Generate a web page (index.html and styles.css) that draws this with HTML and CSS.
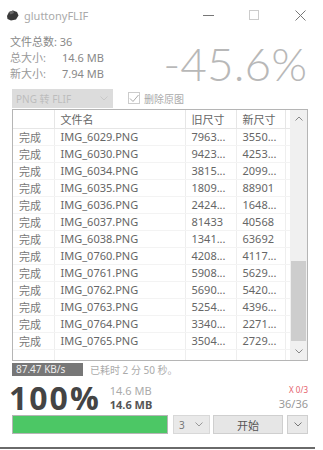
FILE: index.html
```html
<!DOCTYPE html>
<html lang="zh-CN">
<head>
    <meta charset="UTF-8">
    <meta name="viewport" content="width=device-width, initial-scale=1.0">
    <title>gluttonyFLIF</title>
    <link rel="stylesheet" href="styles.css">
</head>
<body>
    <div class="window">
        <div class="titlebar">
            <svg class="logo" width="13" height="11" viewBox="0 0 13 11">
                <polygon points="1,6 3,2 7,0.5 11,2 12.5,5.5 10,9.5 5,10.5 1.5,9" fill="#3a3a3a"/>
                <polygon points="3,2 7,0.5 8,3 4.5,4.5" fill="#6a6a6a"/>
            </svg>
            <span class="title">gluttonyFLIF</span>
            <span class="win-btn"><span class="min-icon"></span></span>
            <span class="win-btn"><span class="max-icon"></span></span>
            <span class="win-btn">
                <svg width="11" height="11" viewBox="0 0 11 11"><path d="M0.5 0.5 L10.5 10.5 M10.5 0.5 L0.5 10.5" stroke="#777" stroke-width="1"/></svg>
            </span>
        </div>

        <div class="summary">
            <div class="info">
                <div class="info-row">文件总数: 36</div>
                <div class="info-row"><span class="label">总大小:</span>14.6 MB</div>
                <div class="info-row"><span class="label">新大小:</span>7.94 MB</div>
            </div>
            <div class="ratio">-45.6%</div>
        </div>

        <div class="options">
            <div class="select">
                <span>PNG 转 FLIF</span>
                <svg width="8" height="5" viewBox="0 0 8 5"><path d="M0.5 0.5 L4 4 L7.5 0.5" fill="none" stroke="#c8c8c8"/></svg>
            </div>
            <label class="check">
                <span class="box">
                    <svg width="10" height="9" viewBox="0 0 10 9"><path d="M1 4.5 L4 7.5 L9.5 1" fill="none" stroke="#aaa" stroke-width="1"/></svg>
                </span>
                删除原图
            </label>
        </div>

        <div class="table-wrap">
            <div class="table-area">
                <table class="files">
                    <colgroup>
                        <col style="width:41px"><col style="width:131px"><col style="width:51px"><col style="width:49px"><col>
                    </colgroup>
                    <thead>
                        <tr><th></th><th>文件名</th><th>旧尺寸</th><th>新尺寸</th><th></th></tr>
                    </thead>
                    <tbody id="rows"></tbody>
                </table>
            </div>
            <div class="scrollbar">
                <svg width="8" height="5" viewBox="0 0 8 5"><path d="M0.5 4.5 L4 1 L7.5 4.5" fill="none" stroke="#888"/></svg>
                <div class="track"><div class="thumb"></div></div>
                <svg width="8" height="5" viewBox="0 0 8 5"><path d="M0.5 0.5 L4 4 L7.5 0.5" fill="none" stroke="#888"/></svg>
            </div>
        </div>

        <div class="status">
            <span class="speed">87.47 KB/s</span>
            <span class="elapsed">已耗时 2 分 50 秒。</span>
        </div>

        <div class="result">
            <div class="percent">100%</div>
            <div class="sizes">
                <div class="old-size">14.6 MB</div>
                <div class="new-size">14.6 MB</div>
            </div>
            <div class="counts">
                <div class="errors">X 0/3</div>
                <div class="done">36/36</div>
            </div>
        </div>

        <div class="controls">
            <div class="progress"><div class="progress-fill" style="width:100%"></div></div>
            <div class="threads">
                <span>3</span>
                <svg width="8" height="5" viewBox="0 0 8 5"><path d="M0.5 0.5 L4 4 L7.5 0.5" fill="none" stroke="#999"/></svg>
            </div>
            <button class="start">开始</button>
            <button class="more">
                <svg width="8" height="5" viewBox="0 0 8 5"><path d="M0.5 0.5 L4 4 L7.5 0.5" fill="none" stroke="#777"/></svg>
            </button>
        </div>

        <div class="bottom-line"></div>
    </div>

    <script>
        // file list
        const files = [
            ['IMG_6029.PNG', '7963...', '3550...'],
            ['IMG_6030.PNG', '9423...', '4253...'],
            ['IMG_6034.PNG', '3815...', '2099...'],
            ['IMG_6035.PNG', '1809...', '88901'],
            ['IMG_6036.PNG', '2424...', '1648...'],
            ['IMG_6037.PNG', '81433', '40568'],
            ['IMG_6038.PNG', '1341...', '63692'],
            ['IMG_0760.PNG', '4208...', '4117...'],
            ['IMG_0761.PNG', '5908...', '5629...'],
            ['IMG_0762.PNG', '5690...', '5420...'],
            ['IMG_0763.PNG', '5254...', '4396...'],
            ['IMG_0764.PNG', '3340...', '2271...'],
            ['IMG_0765.PNG', '3504...', '2729...']
        ];

        const rows = document.getElementById('rows');
        files.forEach(f => {
            const tr = document.createElement('tr');
            tr.innerHTML = `<td>完成</td><td>${f[0]}</td><td>${f[1]}</td><td>${f[2]}</td><td></td>`;
            rows.appendChild(tr);
        });
        // empty row at the bottom
        const empty = document.createElement('tr');
        empty.innerHTML = '<td></td><td></td><td></td><td></td><td></td>';
        rows.appendChild(empty);
    </script>
</body>
</html>
```

FILE: styles.css
```css
* {
    margin: 0;
    padding: 0;
    box-sizing: border-box;
}

body {
    font-family: "Noto Sans", "Noto Sans CJK SC", sans-serif;
    background: #fff;
    color: #777;
    font-size: 11px;
    overflow: hidden;
}

.window {
    width: 323px;
    height: 450px;
    display: flex;
    flex-direction: column;
}

.titlebar {
    height: 30px;
    display: flex;
    align-items: center;
    padding-left: 6px;
}

.title {
    flex: 1;
    margin-left: 5px;
    color: #aaa;
    font-size: 11px;
}

.win-btn {
    width: 46px;
    height: 30px;
    display: flex;
    align-items: center;
    justify-content: center;
}

.min-icon {
    width: 11px;
    border-top: 1px solid #777;
}

.max-icon {
    width: 10px;
    height: 10px;
    border: 1px solid #ccc;
}

.summary {
    display: flex;
    height: 57px;
    padding: 4px 16px 0 10px;
}

.info-row {
    height: 16px;
    line-height: 16px;
    color: #888;
}

.label {
    display: inline-block;
    width: 52px;
    color: #999;
}

.ratio {
    margin-left: auto;
    font-family: "Lato", "Open Sans", sans-serif;
    font-weight: 300;
    font-size: 46px;
    line-height: 50px;
    color: #b8b8b8;
    margin-top: 5px;
}

.options {
    display: flex;
    align-items: center;
    height: 22px;
    padding-left: 12px;
}

.select {
    width: 101px;
    height: 19px;
    background: #dcdcdc;
    color: #bcbcbc;
    display: flex;
    align-items: center;
    justify-content: space-between;
    padding: 0 5px 0 4px;
    font-size: 10px;
}

.check {
    display: flex;
    align-items: center;
    margin-left: 15px;
    color: #aaa;
    font-size: 10px;
}

.box {
    width: 12px;
    height: 12px;
    border: 1px solid #ccc;
    margin-right: 4px;
    display: flex;
    align-items: center;
    justify-content: center;
}

.table-wrap {
    display: flex;
    height: 252px;
    margin: 0 15px 0 12px;
    border: 1px solid #b5b5b5;
}

.table-area {
    flex: 1;
    overflow: hidden;
}

.files {
    width: 100%;
    table-layout: fixed;
    border-collapse: collapse;
}

.files th {
    height: 18px;
    font-weight: normal;
    text-align: left;
    color: #666;
    padding-left: 6px;
    border-right: 1px solid #e6e6e6;
    border-bottom: 1px solid #e6e6e6;
}

.files td {
    height: 17px;
    padding-left: 6px;
    color: #666;
    white-space: nowrap;
    overflow: hidden;
    border-right: 1px solid #eeeeee;
    border-bottom: 1px solid #f3f3f3;
}

.files td:first-child {
    color: #777;
}

.files th:last-child,
.files td:last-child {
    border-right: none;
}

.scrollbar {
    width: 17px;
    background: #f0f0f0;
    display: flex;
    flex-direction: column;
    align-items: center;
    padding: 6px 0;
}

.track {
    flex: 1;
    width: 100%;
    padding: 140px 1px 8px;
}

.thumb {
    height: 80px;
    background: #cdcdcd;
}

.status {
    display: flex;
    align-items: center;
    height: 16px;
    padding: 1px 0 0 12px;
    font-size: 10px;
}

.speed {
    width: 71px;
    height: 13px;
    line-height: 13px;
    background: #777;
    color: #eee;
    padding-left: 4px;
}

.elapsed {
    margin-left: 7px;
    color: #aaa;
}

.result {
    display: flex;
    align-items: center;
    height: 38px;
    padding: 3px 15px 0 9px;
}

.percent {
    font-family: "Open Sans", sans-serif;
    font-weight: bold;
    font-size: 32px;
    line-height: 34px;
    letter-spacing: 2px;
    color: #444;
}

.sizes {
    margin-left: 9px;
    font-size: 11px;
    line-height: 14px;
}

.old-size {
    color: #aaa;
}

.new-size {
    color: #555;
    font-weight: bold;
}

.counts {
    margin-left: auto;
    text-align: right;
}

.errors {
    color: #e5606a;
    font-size: 8px;
    line-height: 12px;
}

.done {
    color: #999;
    font-size: 11px;
    line-height: 16px;
}

.controls {
    display: flex;
    height: 19px;
    padding-left: 12px;
}

.progress {
    width: 156px;
    border: 1px solid #b5b5b5;
    background: #eee;
}

.progress-fill {
    height: 100%;
    background: #4cc765;
}

.threads {
    width: 37px;
    margin-left: 5px;
    background: #e9e9e9;
    border: 1px solid #d8d8d8;
    display: flex;
    align-items: center;
    justify-content: space-between;
    padding: 0 6px 0 5px;
    color: #777;
    font-size: 10px;
}

.start {
    width: 70px;
    margin-left: 3px;
    background: #e6e6e6;
    border: 1px solid #cfcfcf;
    font-family: "Noto Sans CJK SC", sans-serif;
    font-size: 11px;
    color: #555;
}

.more {
    width: 21px;
    margin-left: 4px;
    background: #e9e9e9;
    border: 1px solid #cfcfcf;
    display: flex;
    align-items: center;
    justify-content: center;
}

.bottom-line {
    margin-top: auto;
    margin-bottom: 1px;
    height: 2px;
    background: #6a6a6a;
    width: 315px;
}
```
